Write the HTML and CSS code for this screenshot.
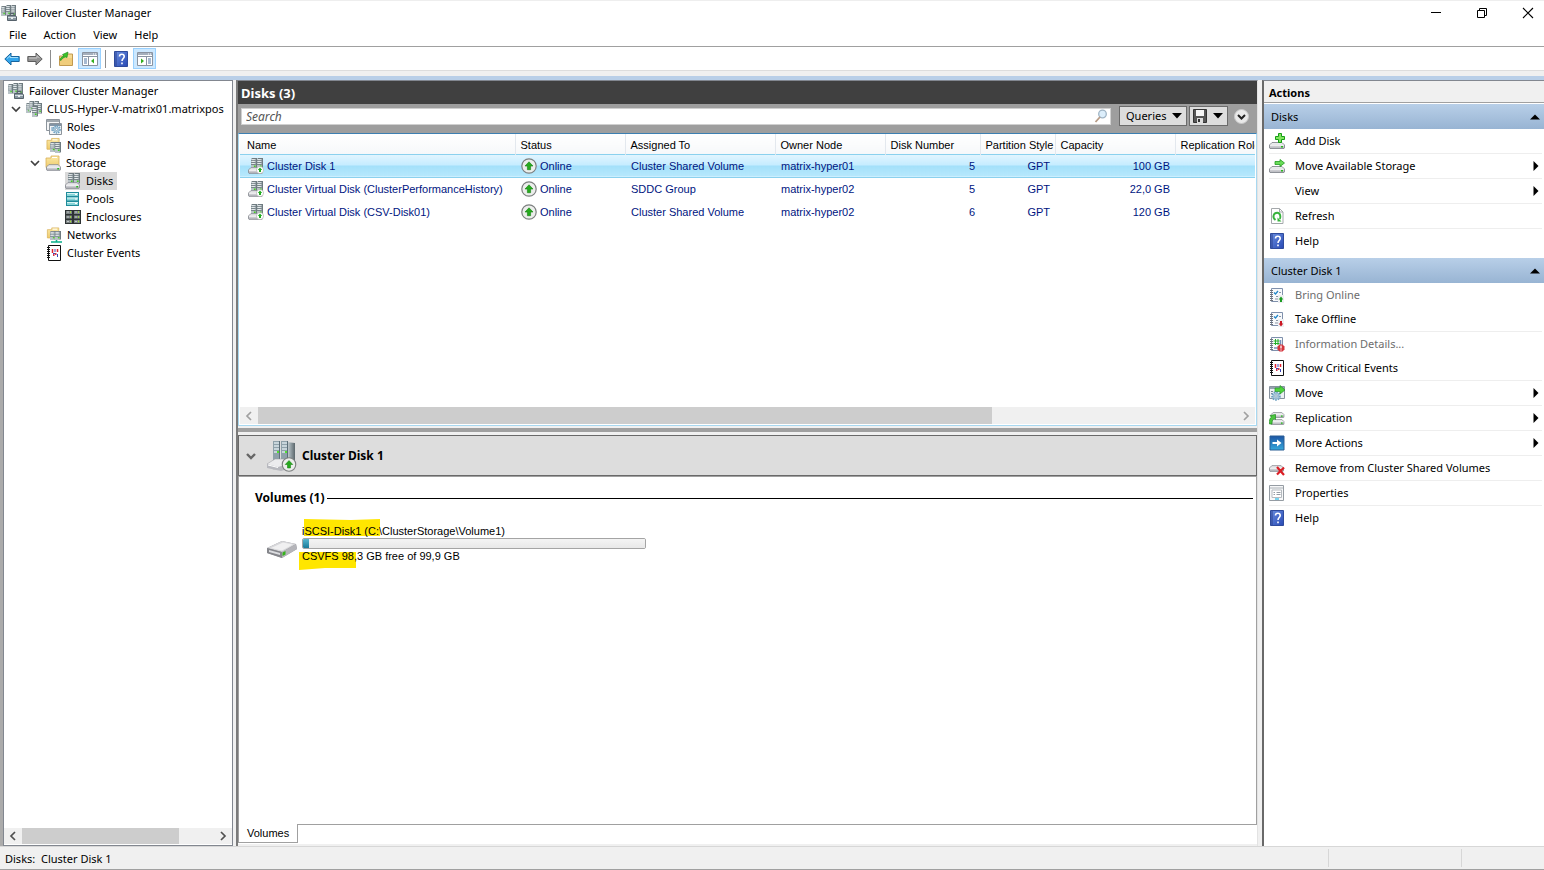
FILE: index.html
```html
<!DOCTYPE html>
<html lang="en">
<head>
<meta charset="utf-8">
<title>Failover Cluster Manager</title>
<link rel="stylesheet" href="styles.css">
</head>
<body>
<svg class="defs" aria-hidden="true">
  <defs>
    <linearGradient id="metal" x1="0" x2="1"><stop offset="0" stop-color="#dfe6e8"/><stop offset=".5" stop-color="#98a4a9"/><stop offset="1" stop-color="#5b666b"/></linearGradient>
    <linearGradient id="disk" x1="0" x2="0" y1="0" y2="1"><stop offset="0" stop-color="#f5f5f7"/><stop offset="1" stop-color="#b5b6bc"/></linearGradient>
    <linearGradient id="folder" x1="0" x2="0" y1="0" y2="1"><stop offset="0" stop-color="#fbe9a6"/><stop offset="1" stop-color="#efcb6c"/></linearGradient>
    <linearGradient id="blue" x1="0" x2="1" y1="0" y2="1"><stop offset="0" stop-color="#6a8fe0"/><stop offset="1" stop-color="#2849b4"/></linearGradient>
    <linearGradient id="more" x1="0" x2="0" y1="0" y2="1"><stop offset="0" stop-color="#1d55a4"/><stop offset="1" stop-color="#36a9dc"/></linearGradient>
    <symbol id="tower" viewBox="0 0 5 11" preserveAspectRatio="none"><path d="M0 1l1-1h4v10l-1 1H0z" fill="#6f7b80"/><path d="M0 1h4v10H0z" fill="#b9c3c7"/><path d="M0 2.500h4M0 4.500h4M0 6.500h4" stroke="#6f7d83" stroke-width=".8"/><path d="M.6 1.700h2.500M.6 3.500h2.500M.6 5.500h2.500" stroke="#f4f7f8" stroke-width=".7"/><path d="M2.400 7.500h1.400v1.500h-1.400z" fill="#42d01d"/></symbol>
    <symbol id="base" viewBox="0 0 16 7"><path d="M3 .5h10L15.500 3v3L15 6.500H1L.5 6V3z" fill="url(#disk)" stroke="#85888f" stroke-width=".9"/><path d="M1 3.200h14" stroke="#fff" stroke-width=".8"/><path d="M12 4h2v1.600h-2z" fill="#2ab81f"/></symbol>
    <symbol id="cluster" viewBox="0 0 16 16"><use href="#tower" x="0" y="1" width="5" height="10"/><use href="#tower" x="5" y="0" width="5" height="11"/><use href="#tower" x="10" y="0" width="5" height="12"/><path d="M6.500 10.500h8l1 1.500v3.500h-9z" fill="#8896a0" stroke="#56626b"/><path d="M9 10V8.500h4V10" fill="none" stroke="#56626b"/><path d="M7 12.500h8" stroke="#d2dbe0"/><path d="M10 12h2v2h-2z" fill="#e8edef"/></symbol>
    <symbol id="servers" viewBox="0 0 16 16"><use href="#tower" x="0" y="2" width="5" height="10"/><use href="#tower" x="3" y="0" width="5" height="10"/><use href="#tower" x="8" y="0" width="5" height="11"/><use href="#tower" x="11" y="2" width="5" height="11"/><use href="#tower" x="6" y="5" width="6" height="11"/></symbol>
    <symbol id="foldershape" viewBox="0 0 16 16"><path d="M1 12.500V3h5V1h8v11.500z" fill="url(#folder)" stroke="#d9b058" stroke-width=".8"/><path d="M7 2.500h5" stroke="#fff"/></symbol>
    <symbol id="gear" viewBox="0 0 10 10"><circle cx="5" cy="5" r="3.900" fill="#d7eaf5" stroke="#6d9fc0" stroke-width="1.800" stroke-dasharray="1.600 1"/><circle cx="5" cy="5" r="2.800" fill="#bed8e9" stroke="#6f9bb7" stroke-width=".6"/><circle cx="5" cy="5" r="1.200" fill="#fff" stroke="#557f9b" stroke-width=".6"/></symbol>
    <symbol id="roles" viewBox="0 0 16 16"><path d="M.5.500h13v11H.5z" fill="#f4f5f6" stroke="#8c949c"/><path d="M1 1h12v2H1z" fill="#a1a8ae"/><path d="M3.500 4.500h12v11h-12z" fill="#f4f5f6" stroke="#8c949c"/><path d="M4 5h11v2H4z" fill="#8494a4"/><path d="M5 9h4M5 11h3" stroke="#6998bf"/><use href="#gear" x="6" y="6" width="9" height="9"/></symbol>
    <symbol id="nodes" viewBox="0 0 16 16"><use href="#foldershape" width="15" height="16"/><use href="#tower" x="4" y="5" width="6" height="10"/><use href="#tower" x="9" y="5" width="6" height="11"/></symbol>
    <symbol id="storage" viewBox="0 0 16 16"><use href="#foldershape" width="16" height="16"/><use href="#base" x="1" y="9" width="15" height="7"/></symbol>
    <symbol id="disks" viewBox="0 0 16 16"><use href="#tower" x="3" y="0" width="6" height="11"/><use href="#tower" x="9" y="0" width="6" height="11"/><use href="#base" x="0" y="9" width="15" height="7"/></symbol>
    <symbol id="pools" viewBox="0 0 16 16"><path d="M1 1h13v14H1z" fill="#1f8b9a"/><path d="M2 2h11v3H2zM2 6.500h11v3H2zM2 11h11v3H2z" fill="#87d5d8"/><path d="M2 2.500h11M2 7h11M2 11.500h11" stroke="#d7f5f4"/><path d="M10 3h2v1h-2zM10 7.500h2v1h-2zM10 12h2v1h-2z" fill="#fff"/></symbol>
    <symbol id="enclosures" viewBox="0 0 16 16"><path d="M0 1h16v14H0z" fill="#2d3233"/><path d="M1 2h6v3H1zM9 2h6v3H9zM1 6.500h6v3H1zM9 6.500h6v3H9zM1 11h6v3H1zM9 11h6v3H9z" fill="#7d8485"/><path d="M2 3h2M10 3h2M2 8h2M10 8h2M2 12.500h2M10 12.500h2" stroke="#c2c8c8"/><path d="M5 3h1M13 3h1M5 8h1M13 8h1M5 12.500h1M13 12.500h1" stroke="#a6ee2b" stroke-width="1.500"/></symbol>
    <symbol id="networks" viewBox="0 0 16 16"><use href="#foldershape" width="15" height="14"/><use href="#tower" x="4" y="4" width="6" height="9"/><use href="#tower" x="9" y="4" width="6" height="9"/><path d="M5 15h11M10.500 13v2" stroke="#08b08a" stroke-width="1.600"/></symbol>
    <symbol id="events" viewBox="0 0 16 16"><path d="M2.500.500h12v15h-12z" fill="#fff" stroke="#111"/><path d="M1 2.500h3M1 4.500h3M1 6.500h3M1 8.500h3M1 10.500h3M1 12.500h3" stroke="#111"/><path d="M6.500 4v4M11.500 4v3" stroke="#e1232d" stroke-width="1.500"/><path d="M7 9h1.500v2H7zM9 8h1.500v2H9z" fill="#d0324a"/><path d="M7 8.500h2M9 4v3M11.500 9v3" stroke="#3a43b8"/></symbol>
    <symbol id="up" viewBox="0 0 16 16"><circle cx="8" cy="8" r="7.200" fill="#eceeec" stroke="#7c7f7f" stroke-width="1.200"/><path d="M8 3.800L4 8h2.400v3.700h3.200V8H12z" fill="#27aa1e" stroke="#168212" stroke-width=".6"/></symbol>
    <symbol id="diskup" viewBox="0 0 16 16"><use href="#disks" width="16" height="16"/><circle cx="12" cy="12" r="3.600" fill="#fff" stroke="#aaa" stroke-width=".6"/><path d="M12 9.500L9.800 12H11v2h2v-2h1.200z" fill="#22ad20"/></symbol>
    <symbol id="bigdisk" viewBox="0 0 32 32"><path d="M20 2l9 1v20h-9z" fill="url(#metal)"/><path d="M7 1h7v21H7zM15 1h7v21h-7z" fill="#8fa1aa"/><path d="M8 3h5M8 6h5M8 9h5M16 3h5M16 6h5M16 9h5M16 12h5M8 12h5" stroke="#dce6eb" stroke-width="1.500"/><path d="M13.500 1v21M21.500 1v21" stroke="#5d6f79"/><path d="M11 12h2M19 12h2" stroke="#4fe22d" stroke-width="2"/><path d="M1 24l8-5h12l6 4-7 6H7z" fill="#ececee" stroke="#96979d" stroke-width=".5"/><path d="M1 24l11 3 10-3v5l-7 2L1 28z" fill="#b8b9bf"/><path d="M2 25l10 2.500" stroke="#fff"/><use href="#up" x="15" y="17" width="16" height="15"/></symbol>
    <symbol id="drive" viewBox="0 0 32 20"><path d="M1 9L16 2l14 3 1 5-15 9-15-5z" fill="#94959a"/><path d="M1 9L16 2l14 3-14 8z" fill="#d7d7da"/><path d="M5 9L17 3.500l10 2-11 6z" fill="#f0f0f1"/><path d="M1 9l15 4v6L1 14z" fill="#85868b"/><path d="M3 11l11 3v2L3 13z" fill="#dcdde0"/><path d="M16 13l14-8 1 5-15 9z" fill="#b5b5ba"/><path d="M16.500 13.500l3-1.500v3.500l-3 1.500z" fill="#35b21b"/></symbol>
    <symbol id="back" viewBox="0 0 16 14"><path d="M.8 7L7 1v3.500h8.200v5H7V13z" fill="#33a5ec" stroke="#17649e"/><path d="M3 6.500l3-2.700v1.700h8" fill="none" stroke="#a4def9"/></symbol>
    <symbol id="forward" viewBox="0 0 16 14"><path d="M15.200 7L9 1v3.500H.8v5H9V13z" fill="#929292" stroke="#5d5d5d"/><path d="M2 6h8V3.700l2.500 2.500" fill="none" stroke="#c9c9c9"/></symbol>
    <symbol id="upfolder" viewBox="0 0 16 16"><path d="M1.500 14.500V5h6l1-2h6v11.500z" fill="#f5da93" stroke="#c29a50"/><path d="M2 7h12v7H2z" fill="#f0cd7c"/><path d="M2 9c0-2 2-3.500 4-4L4.500 3.500 10 1 9 6.500 7.500 6C5.500 6.500 4 7.500 3 9.500z" fill="#3bc329" stroke="#198a18" stroke-width=".6"/></symbol>
    <symbol id="paneleft" viewBox="0 0 16 14"><path d="M.5.500h15v13H.5z" fill="#fff" stroke="#8a93a0"/><path d="M1 1h14v2H1z" fill="#a5afbd"/><path d="M11 2h1M13 2h1" stroke="#fff"/><path d="M1 4.500h14M6.500 5v8" stroke="#8a94a4"/><path d="M2 7h3M2 9h3M2 11h3" stroke="#4e75a3"/><path d="M12 6.500v5L9 9z" fill="#32af1e"/></symbol>
    <symbol id="paneright" viewBox="0 0 16 14"><path d="M.5.500h15v13H.5z" fill="#fff" stroke="#8a93a0"/><path d="M1 1h14v2H1z" fill="#a5afbd"/><path d="M11 2h1M13 2h1" stroke="#fff"/><path d="M1 4.500h14M9.500 5v8" stroke="#8a94a4"/><path d="M11 7h3M11 9h3M11 11h3" stroke="#4e75a3"/><path d="M4 6.500v5L7 9z" fill="#32af1e"/></symbol>
    <symbol id="help" viewBox="0 0 14 16"><path d="M.5.500h13v15H.5z" fill="url(#blue)" stroke="#2f4b9c"/><path d="M2 1v14" stroke="#2a418d"/><path d="M5.500 5.500c0-3 4.700-3 4.700 0C10.200 7.500 8 7.500 8 10M8 11.500v1.800" fill="none" stroke="#fff" stroke-width="1.600"/></symbol>
    <symbol id="adddisk" viewBox="0 0 16 16"><use href="#base" x="0" y="9" width="16" height="7"/><path d="M9.500.5h3v3h3v3h-3v3h-3v-3h-3v-3h3z" fill="#81e55e" stroke="#159d16"/></symbol>
    <symbol id="movedisk" viewBox="0 0 16 16"><use href="#base" x="0" y="8" width="16" height="7"/><path d="M6 3.500h5v-2l4.500 3.500L11 8.500v-2H6z" fill="#6bdc58" stroke="#1e9a20" stroke-width=".8"/></symbol>
    <symbol id="refresh" viewBox="0 0 16 16"><path d="M2.500.500h8l3.500 3.500v11.500H2.500z" fill="#fff" stroke="#a4a8ab"/><path d="M10.500.500V4H14" fill="none" stroke="#a4a8ab"/><path d="M6.500 12C2.500 9 5 4.800 8.200 4.800S12 9 10.800 11" fill="none" stroke="#37b33c" stroke-width="1.900"/><path d="M8.500 9.500v4h4z" fill="#37b33c"/></symbol>
    <symbol id="note" viewBox="0 0 16 16"><path d="M2.500 1.500h11v13h-11z" fill="#f8fafc" stroke="#7f90ac"/><path d="M1 3.500h3M1 5.500h3M1 7.500h3M1 9.500h3M1 11.500h3M1 13.500h3" stroke="#6d727b"/></symbol>
    <symbol id="bring" viewBox="0 0 16 16"><use href="#note" width="16" height="16"/><path d="M5 5.500L6.500 7 9 4" fill="none" stroke="#2186c9" stroke-width="1.300"/><path d="M10 5.500h2M7 9.500h3M6 12h3" stroke="#8a94a4"/><path d="M9 8h6v8H9z" fill="#eef0f2"/><path d="M12 9.500l-2.300 3h1.300V15h2v-2.500h1.300z" fill="#1c9c22"/></symbol>
    <symbol id="take" viewBox="0 0 16 16"><use href="#note" width="16" height="16"/><path d="M5 5.500L6.500 7 9 4" fill="none" stroke="#2186c9" stroke-width="1.300"/><path d="M10 5.500h2M7 9.500h3M6 12h3" stroke="#8a94a4"/><path d="M9 8h6v8H9z" fill="#eef0f2"/><path d="M12 15.500l-2.300-3h1.300V10h2v2.500h1.300z" fill="#cb1723"/></symbol>
    <symbol id="info" viewBox="0 0 16 16"><use href="#note" width="16" height="16"/><path d="M6.500 3v6M9 3v6M4.500 5h6M4.500 7.500h6" stroke="#24ae28" stroke-width="1"/><path d="M11.500 4v5M5 12h5" stroke="#7590ba" stroke-width="1.500"/><path d="M10.500 8.500h3l2 2v3l-2 2h-3l-2-2v-3z" fill="#d4353d"/><path d="M12 9.500v3M12 13.500v1" stroke="#fff" stroke-width="1.300"/></symbol>
    <symbol id="move" viewBox="0 0 16 16"><path d="M.5 1.500h15v12H.5z" fill="#edf0f3" stroke="#87929e"/><path d="M1 2h14v2H1z" fill="#94a2ae"/><path d="M2 6.500h2M2 8.500h2" stroke="#7b8996"/><use href="#gear" x="2" y="6" width="10" height="10"/><path d="M6 3h5V.5L16 5l-5 4V6.500H6z" fill="#4fd43c" stroke="#269629" stroke-width=".7"/></symbol>
    <symbol id="replication" viewBox="0 0 16 16"><use href="#base" x="1" y="2" width="15" height="6"/><use href="#base" x="1" y="9" width="15" height="6"/><path d="M.5 14c-.5-4 .5-6 2-7L1 5.500 6.500 4.500v5L5 8.500C3.500 9.500 3 11 3 14z" fill="#4cc83e" stroke="#218a22" stroke-width=".7"/></symbol>
    <symbol id="moreactions" viewBox="0 0 16 16"><path d="M1 1h14v14H1z" fill="url(#more)" stroke="#2a5f94"/><path d="M3.500 7H8V4.500L12.500 8 8 11.500V9H3.500z" fill="#fff"/></symbol>
    <symbol id="remove" viewBox="0 0 16 16"><use href="#base" x="0" y="5" width="15" height="7"/><path d="M8 7l7 8M15 7.500l-7 7" stroke="#db1e25" stroke-width="2.200"/></symbol>
    <symbol id="properties" viewBox="0 0 16 16"><path d="M.5.500h14v15H.5z" fill="#f7f8f9" stroke="#959ca3"/><path d="M1 3h13" stroke="#aab0b6"/><path d="M3 5h9.500v7.500H3z" fill="#fff" stroke="#b5babf"/><path d="M4.500 7.500h1.500M7.500 7.500h4M4.500 9.500h1.500M7.500 9.500h4" stroke="#939ba3"/><path d="M6 14h4" stroke="#34bfe8" stroke-width="1.300"/></symbol>
    <symbol id="chev" viewBox="0 0 10 8"><path d="M1 2l4 4 4-4" fill="none" stroke="currentColor" stroke-width="1.700"/></symbol>
    <symbol id="left" viewBox="0 0 8 10"><path d="M6 1L2 5l4 4" fill="none" stroke="currentColor" stroke-width="1.700"/></symbol>
    <symbol id="right" viewBox="0 0 8 10"><path d="M2 1l4 4-4 4" fill="none" stroke="currentColor" stroke-width="1.700"/></symbol>
    <symbol id="tdown" viewBox="0 0 10 6"><path d="M0 0h10L5 5.500z" fill="#000"/></symbol>
    <symbol id="tup" viewBox="0 0 10 6"><path d="M0 5.500h10L5 .5z" fill="#000"/></symbol>
    <symbol id="tright" viewBox="0 0 6 10"><path d="M.5 0v10L5.500 5z" fill="#000"/></symbol>
  </defs>
</svg>
<div class="window">
  <header class="titlebar">
    <svg class="icon"><use href="#cluster"/></svg>
    <h1>Failover Cluster Manager</h1>
    <div class="caption">
      <button aria-label="Minimize"><svg viewBox="0 0 12 12"><path d="M1 5.500h10" stroke="#000"/></svg></button>
      <button aria-label="Restore"><svg viewBox="0 0 12 12"><path d="M1.500 3.500h7v7h-7zM3.500 3V1.500h7v7H9" fill="none" stroke="#000"/></svg></button>
      <button aria-label="Close"><svg viewBox="0 0 12 12"><path d="M1 1l10 10M11 1L1 11" stroke="#000" stroke-width="1.100"/></svg></button>
    </div>
  </header>
  <nav class="menu"><button>File</button><button>Action</button><button>View</button><button>Help</button></nav>
  <div class="toolbar">
    <button aria-label="Back"><svg class="icon"><use href="#back"/></svg></button>
    <button aria-label="Forward"><svg class="icon"><use href="#forward"/></svg></button>
    <i></i>
    <button aria-label="Up one level"><svg class="icon"><use href="#upfolder"/></svg></button>
    <button class="on" aria-label="Show console tree"><svg class="icon"><use href="#paneleft"/></svg></button>
    <i></i>
    <button aria-label="Help"><svg class="icon"><use href="#help"/></svg></button>
    <button class="on" aria-label="Show action pane"><svg class="icon"><use href="#paneright"/></svg></button>
  </div>
  <main class="main">
    <nav class="tree">
      <ul>
        <li class="l0"><svg class="icon"><use href="#cluster"/></svg><span>Failover Cluster Manager</span></li>
        <li class="l1"><svg class="chev"><use href="#chev"/></svg><svg class="icon"><use href="#servers"/></svg><span>CLUS-Hyper-V-matrix01.matrixpos</span></li>
        <li class="l2"><svg class="icon"><use href="#roles"/></svg><span>Roles</span></li>
        <li class="l2"><svg class="icon"><use href="#nodes"/></svg><span>Nodes</span></li>
        <li class="l2x"><svg class="chev"><use href="#chev"/></svg><svg class="icon"><use href="#storage"/></svg><span>Storage</span></li>
        <li class="l3 selected"><div><svg class="icon"><use href="#disks"/></svg><span>Disks</span></div></li>
        <li class="l3"><svg class="icon"><use href="#pools"/></svg><span>Pools</span></li>
        <li class="l3"><svg class="icon"><use href="#enclosures"/></svg><span>Enclosures</span></li>
        <li class="l2"><svg class="icon"><use href="#networks"/></svg><span>Networks</span></li>
        <li class="l2"><svg class="icon"><use href="#events"/></svg><span>Cluster Events</span></li>
      </ul>
      <div class="scroll"><button aria-label="Scroll left"><svg><use href="#left"/></svg></button><div class="track"><div class="thumb"></div></div><button aria-label="Scroll right"><svg><use href="#right"/></svg></button></div>
    </nav>
    <section class="center">
      <div class="upper">
        <h2>Disks (3)</h2>
        <div class="search">
          <div class="field"><input type="text" placeholder="Search" aria-label="Search"><svg viewBox="0 0 14 14"><circle cx="8.500" cy="5" r="3.800" fill="#dceefb" stroke="#9fb4c5" stroke-width="1.300"/><path d="M6 8l-4.500 5" stroke="#b79b86" stroke-width="1.800"/></svg></div>
          <button class="query">Queries <svg><use href="#tdown"/></svg></button>
          <button class="save" aria-label="Save query"><svg class="floppy" viewBox="0 0 14 14"><path d="M.5.500h13v13H.5z" fill="#555" stroke="#333"/><path d="M3 1h8v6H3z" fill="#f5f5f5"/><path d="M4 9h6v5H4z" fill="#ddd"/><path d="M5 10h2v3H5z" fill="#333"/></svg><svg><use href="#tdown"/></svg></button>
          <button class="round" aria-label="Expand query"><svg viewBox="0 0 15 15"><circle cx="7.500" cy="7.500" r="7" fill="#e9e9e9" stroke="#c8c8c8"/><path d="M4 6l3.500 3.500L11 6" fill="none" stroke="#222" stroke-width="2"/></svg></button>
        </div>
        <div class="list">
          <div class="tablewrap">
            <table>
              <colgroup><col class="c275"><col class="c110"><col class="c150"><col class="c110"><col class="c95"><col class="c75"><col class="c120"><col class="c120"></colgroup>
              <thead><tr><th>Name</th><th>Status</th><th>Assigned To</th><th>Owner Node</th><th>Disk Number</th><th>Partition Style</th><th>Capacity</th><th>Replication Role</th></tr></thead>
              <tbody>
                <tr class="sel"><td><div><svg class="icon"><use href="#diskup"/></svg>Cluster Disk 1</div></td><td><div><svg class="icon"><use href="#up"/></svg>Online</div></td><td>Cluster Shared Volume</td><td>matrix-hyper01</td><td class="num">5</td><td class="num">GPT</td><td class="num">100 GB</td><td></td></tr>
                <tr><td><div><svg class="icon"><use href="#diskup"/></svg>Cluster Virtual Disk (ClusterPerformanceHistory)</div></td><td><div><svg class="icon"><use href="#up"/></svg>Online</div></td><td>SDDC Group</td><td>matrix-hyper02</td><td class="num">5</td><td class="num">GPT</td><td class="num">22,0 GB</td><td></td></tr>
                <tr><td><div><svg class="icon"><use href="#diskup"/></svg>Cluster Virtual Disk (CSV-Disk01)</div></td><td><div><svg class="icon"><use href="#up"/></svg>Online</div></td><td>Cluster Shared Volume</td><td>matrix-hyper02</td><td class="num">6</td><td class="num">GPT</td><td class="num">120 GB</td><td></td></tr>
              </tbody>
            </table>
          </div>
          <div class="scroll dim"><button aria-label="Scroll left"><svg><use href="#left"/></svg></button><div class="track"><div class="thumb"></div></div><button aria-label="Scroll right"><svg><use href="#right"/></svg></button></div>
        </div>
      </div>
      <div class="splitter"></div>
      <div class="lower">
        <div class="dhead"><svg class="chev" viewBox="0 0 10 8"><path d="M1 2l4 4 4-4" fill="none" stroke="#666" stroke-width="2.400"/></svg><svg class="big"><use href="#bigdisk"/></svg><h3>Cluster Disk 1</h3></div>
        <div class="detail">
          <div class="rule"><h4>Volumes (1)</h4><hr></div>
          <div class="volume">
            <svg class="drive"><use href="#drive"/></svg>
            <div class="vinfo">
              <svg class="marks" viewBox="0 0 90 54"><path d="M6 1l47 1 29-1v17H6z" fill="#ffe600"/><path d="M1 34h57v16l-31 0-26 2z" fill="#ffe600"/></svg>
              <label for="usage">iSCSI-Disk1 (C:\ClusterStorage\Volume1)</label>
              <progress id="usage" max="100" value="1.8"></progress>
              <p>CSVFS 98,3 GB free of 99,9 GB</p>
            </div>
          </div>
        </div>
        <div class="tabs"><button>Volumes</button><div class="rest"></div></div>
      </div>
    </section>
    <aside class="actions">
      <h2>Actions</h2>
      <button class="bar">Disks<svg><use href="#tup"/></svg></button>
      <div class="group">
        <button class="sep"><svg class="icon"><use href="#adddisk"/></svg><span>Add Disk</span></button>
        <button class="sep"><svg class="icon"><use href="#movedisk"/></svg><span>Move Available Storage</span><svg class="arrow"><use href="#tright"/></svg></button>
        <button class="sep"><svg class="icon"></svg><span>View</span><svg class="arrow"><use href="#tright"/></svg></button>
        <button class="sep"><svg class="icon"><use href="#refresh"/></svg><span>Refresh</span></button>
        <button><svg class="icon"><use href="#help"/></svg><span>Help</span></button>
      </div>
      <button class="bar">Cluster Disk 1<svg><use href="#tup"/></svg></button>
      <div class="group">
        <button disabled><svg class="icon"><use href="#bring"/></svg><span>Bring Online</span></button>
        <button class="sep"><svg class="icon"><use href="#take"/></svg><span>Take Offline</span></button>
        <button disabled><svg class="icon"><use href="#info"/></svg><span>Information Details...</span></button>
        <button class="sep"><svg class="icon"><use href="#events"/></svg><span>Show Critical Events</span></button>
        <button class="sep"><svg class="icon"><use href="#move"/></svg><span>Move</span><svg class="arrow"><use href="#tright"/></svg></button>
        <button class="sep"><svg class="icon"><use href="#replication"/></svg><span>Replication</span><svg class="arrow"><use href="#tright"/></svg></button>
        <button class="sep"><svg class="icon"><use href="#moreactions"/></svg><span>More Actions</span><svg class="arrow"><use href="#tright"/></svg></button>
        <button class="sep"><svg class="icon"><use href="#remove"/></svg><span>Remove from Cluster Shared Volumes</span></button>
        <button class="sep"><svg class="icon"><use href="#properties"/></svg><span>Properties</span></button>
        <button><svg class="icon"><use href="#help"/></svg><span>Help</span></button>
      </div>
    </aside>
  </main>
  <footer class="status"><span>Disks:&nbsp; Cluster Disk 1</span><i></i><i></i></footer>
</div>
</body>
</html>
```

FILE: styles.css
```css
* { box-sizing: border-box; }
body { margin: 0; background: #fff; color: #000; font: 11px/18px "Noto Sans", sans-serif; }
h1, h2, h3, h4, p, ul { margin: 0; padding: 0; font-size: inherit; }
h1 { font-weight: 400; }
ul { list-style: none; }
button { display: flex; align-items: center; border: 0; padding: 0; margin: 0; background: none; color: inherit; font: inherit; text-align: left; }
svg { flex: none; display: block; }
.defs { position: absolute; width: 0; height: 0; }
.icon { width: 16px; height: 16px; }
.window { display: flex; flex-direction: column; height: 100vh; border-top: 1px solid #eee; overflow: hidden; }

.titlebar { display: flex; align-items: center; flex: none; height: 24px; padding-left: 1px; gap: 5px; }
.caption { display: flex; margin-left: auto; margin-right: -7px; }
.caption button { width: 46px; height: 22px; justify-content: center; }
.caption svg { width: 12px; height: 12px; }
.menu { display: flex; flex: none; gap: 17px; height: 22px; padding: 0 9px 2px; border-bottom: 1px solid #a0a0a0; }
.toolbar { display: flex; align-items: center; flex: none; gap: 1px; height: 24px; padding-left: 1px; border-bottom: 1px solid #ddd; }
.toolbar button { width: 22px; height: 21px; justify-content: center; }
.toolbar .on { border: 1px solid #99d1ff; background: #cce8ff; width: 23px; }
.toolbar i { width: 1px; height: 18px; margin: 0 3px; background: #8d8d8d; }

.main { display: flex; flex: 1; gap: 4px; min-height: 0; padding-left: 3px; padding-top: 4px; border-top: 5px solid #f0f0f0; background: linear-gradient(#b9cfe8, #b9cfe8) top / 100% 4px no-repeat, linear-gradient(#ababab, #ababab) left / 3px 100% no-repeat, #f0f0f0; }
.main > * { border-top: 1px solid #828790; }
.tree { display: flex; flex-direction: column; flex: none; width: 230px; background: #fff; border: 1px solid #828790; }
.tree ul { flex: 1; padding-top: 1px; overflow: hidden; }
.tree li, .tree li > div { display: flex; align-items: center; gap: 5px; height: 18px; white-space: nowrap; }
.tree .chev { width: 10px; height: 8px; color: #404040; }
.tree .l0 { padding-left: 4px; }
.tree .l1 { padding-left: 7px; }
.tree .l2 { padding-left: 42px; }
.tree .l2x { padding-left: 26px; }
.tree .l3 { padding-left: 61px; }
.tree .selected > div { padding-right: 4px; background: #d9d9d9; }
.scroll { display: flex; flex: none; height: 17px; background: #f0f0f0; color: #505050; }
.scroll button { width: 18px; justify-content: center; }
.scroll button svg { width: 8px; height: 10px; }
.scroll .track { flex: 1; }
.scroll .thumb { width: 82%; height: 100%; background: #cdcdcd; }
.tree .scroll { height: 16px; margin-bottom: 1px; }
.dim { color: #a0a0a0; }
.dim .thumb { width: 75%; }

.center { display: flex; flex-direction: column; flex: 1; min-width: 0; margin-left: -1px; padding-bottom: 2px; border-left: 2px solid #7a7a7a; border-right: 1px solid #e3e3e3; }
.upper { display: flex; flex-direction: column; flex: 345 1 0; min-height: 0; }
.upper h2 { flex: none; height: 23px; padding: 3px 3px 0; background: #404040; color: #fff; font-size: 13px; }
.search { display: flex; flex: none; align-items: center; height: 29px; padding: 0 8px 5px 3px; gap: 2px; background: #9e9e9e; }
.field { display: flex; flex: 1; align-items: center; height: 17px; padding-right: 2px; margin-right: 6px; background: #fff; border: 1px solid #d0d0d0; }
.field input { flex: 1; border: 0; padding: 0 4px; outline: 0; background: none; font: italic 12px/15px "Noto Sans", sans-serif; height: 15px; }
.field input::placeholder { color: #555; }
.field svg { width: 14px; height: 14px; }
.query, .save { justify-content: space-between; height: 20px; border: 1px solid #6b6b6b; background: #ddd; }
.query { width: 68px; padding: 0 4px 0 6px; }
.save { width: 39px; padding: 0 4px 0 3px; }
.query svg, .save svg { width: 10px; height: 6px; }
.save .floppy { width: 14px; height: 14px; }
.round { margin-left: 4px; }
.round svg { width: 15px; height: 15px; }
.list { display: flex; flex-direction: column; flex: 1; min-height: 0; padding: 0 1px 1px; background: #fff; border: 1px solid #a8d8f0; border-top-color: #3c7fb1; }
.tablewrap { flex: 1; overflow: hidden; }
table { table-layout: fixed; width: 1055px; border-collapse: collapse; font: 11px/14px "Liberation Sans", Arial, sans-serif; }
.c275 { width: 275px; } .c110 { width: 110px; } .c150 { width: 150px; } .c95 { width: 95px; } .c75 { width: 75px; } .c120 { width: 120px; }
th { height: 20px; padding: 2px 0 0 5px; border-right: 1px solid #e3e8ee; background: linear-gradient(#fff, #f6f8fa); font-weight: 400; text-align: left; white-space: nowrap; }
th:first-child { padding-left: 7px; }
td { height: 23px; padding: 0 5px 0 6px; color: #00157f; white-space: nowrap; }
td div { display: flex; align-items: center; gap: 3px; }
td:first-child { padding-left: 8px; }
td.num { text-align: right; }
.sel td { background: linear-gradient(#e2f5ff 0%, #c5ecff 48%, #a3e0fa 52%, #b7e8fc 100%); border: solid #8bd1ee; border-width: 1px 0; }

.splitter { flex: none; height: 9px; border: solid #f0f0f0; border-width: 2px 0 3px; background: #a0a0a0; }
.lower { display: flex; flex-direction: column; flex: 408 1 0; min-height: 0; font-family: "Liberation Sans", Arial, sans-serif; }
.dhead { display: flex; flex: none; align-items: center; height: 41px; padding-left: 7px; border: 1px solid #696969; background: #ddd; }
.dhead .chev { width: 10px; height: 8px; margin-right: 10px; }
.dhead .big { width: 32px; height: 32px; margin-right: 4px; }
.lower h3, .lower h4 { font: bold 12px/16px "Noto Sans", sans-serif; }
.detail { flex: 1; min-height: 0; border: solid #a0a0a0; border-width: 1px 1px 0; padding: 13px 3px 0 16px; background: #fff; }
.rule { display: flex; align-items: center; gap: 3px; }
.rule hr { flex: 1; margin: 0; border: 0; height: 1px; background: #000; }
.volume { display: flex; align-items: center; gap: 4px; padding: 18px 0 0 11px; }
.drive { width: 32px; height: 20px; margin-top: 10px; }
.vinfo { position: relative; width: 344px; line-height: 14px; }
.vinfo label, .vinfo p, .vinfo progress { position: relative; display: block; }
.marks { position: absolute; left: -4px; top: -6px; width: 90px; height: 54px; }
.vinfo progress { appearance: none; width: 100%; height: 11px; border: 1px solid #a4a4a4; border-radius: 2px; background: #eee; overflow: hidden; }
progress::-webkit-progress-bar { background: linear-gradient(#f4f4f4, #e8e8e8); }
progress::-webkit-progress-value { background: linear-gradient(#56b6cf, #1b7b99); }
.tabs { display: flex; flex: none; height: 20px; background: #fff; }
.tabs button { height: 19px; padding: 0 8px; border: 1px solid #a0a0a0; border-top: 0; }
.tabs .rest { flex: 1; border-top: 1px solid #a0a0a0; }

.actions { flex: none; width: 282px; background: #fff; border-left: 2px solid #696969; overflow: hidden; }
.actions h2 { height: 22px; padding: 3px 5px 0; background: #f0f0f0; border-bottom: 1px solid #a0a0a0; line-height: 17px; }
.bar { justify-content: space-between; width: 100%; height: 25px; padding: 0 4px 0 7px; background: linear-gradient(#b8cfe8, #98b4d3); }
.actions h2 + .bar { margin-top: 1px; }
.bar svg { width: 10px; height: 6px; }
.group { padding: 0 2px 5px 5px; }
.group button { width: 100%; height: 24px; gap: 10px; white-space: nowrap; }
.group .sep { height: 25px; border-bottom: 1px solid #eee; }
.group button:disabled { color: #6d6d6d; }
.group .arrow { width: 6px; height: 10px; margin-left: auto; margin-right: 3px; }

.status { display: flex; flex: none; height: 24px; padding-left: 5px; background: #f0f0f0; border-top: 1px solid #d7d7d7; border-bottom: 1px solid #a0a0a0; line-height: 23px; }
.status span { flex: 1; }
.status i { width: 133px; margin: 2px 0; border-left: 1px solid #d7d7d7; }
.status i:last-child { width: 83px; }
```
